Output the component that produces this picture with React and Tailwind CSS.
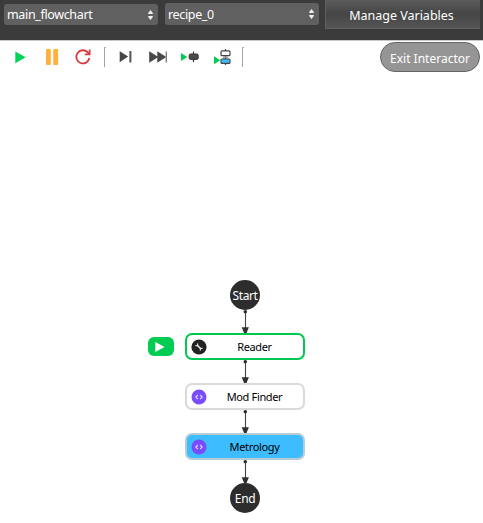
import React from "react";

function Select({ label, className = "" }) {
  return (
    <div className={`flex w-[154px] items-center justify-between rounded-[3px] bg-[#606060] pl-[3px] pr-[5px] text-[12.5px] tracking-[-0.35px] text-white ${className}`}>
      <span className="pt-[2px] leading-none">{label}</span>
      <svg width="5" height="10" viewBox="0 0 5 10" fill="#eeeeee">
        <path d="M2.5 0 4.8 3V4H.2V3ZM2.5 10 4.8 7V6H.2V7Z" />
      </svg>
    </div>
  );
}

function Toolbar() {
  return (
    <div className="flex h-[34px] items-start justify-between border-t border-[#c8c8c8] pr-[3px]">
      <svg width="250" height="32" viewBox="0 41 250 32">
        <path d="M15.3 51.5 25.7 57.3 15.3 63.2Z" fill="#00d358" />
        <rect x="46" y="49" width="4.8" height="16" rx="1" fill="#ffb13b" />
        <rect x="53.3" y="49" width="4.8" height="16" rx="1" fill="#ffb13b" />
        <path d="M89.4 58A6.6 6.6 0 1 1 87.6 52.2L89.4 54" fill="none" stroke="#d63c3f" strokeWidth="1.8" />
        <path d="M89.7 49.5V54.3H84.8" fill="none" stroke="#d63c3f" strokeWidth="1.7" />
        <path d="M106 47.5H104.5V67" fill="none" stroke="#a2a2a2" />
        <path d="M119.7 51.2 128.2 56.6 119.7 62.2Z" fill="#484848" />
        <path d="M130.4 51V62.5" stroke="#555" strokeWidth="2" />
        <path d="M149.2 51.2 158.3 57 149.2 62.8ZM157.3 51.2 166.3 57 157.3 62.8Z" fill="#484848" />
        <path d="M166.3 51.5V62.5" stroke="#777" strokeWidth="1.3" />
        <path d="M181 53 187.3 57 181 61Z" fill="#00cc52" />
        <path d="M193.5 51.5V62" stroke="#333" strokeWidth="1.2" />
        <rect x="189.2" y="54" width="9" height="5.4" rx="1.4" fill="#4b4b4b" stroke="#333" strokeWidth="1" />
        <path d="M214 56.3 220.2 60.3 214 64.3Z" fill="#00cc52" />
        <path d="M225.5 49V65" stroke="#444" strokeWidth="1.2" />
        <rect x="221" y="50.9" width="9" height="4.8" rx="1" fill="#fff" stroke="#444" strokeWidth="1.2" />
        <path d="M223 57.5H228" stroke="#999" strokeWidth="2" />
        <rect x="221" y="59" width="9" height="4.4" rx="1" fill="#3dbdff" stroke="#444" strokeWidth="1.1" />
        <path d="M244 47.5H242.5V67" fill="none" stroke="#a2a2a2" />
      </svg>
      <button className="mt-px flex h-[30px] w-[100px] items-center justify-center whitespace-nowrap rounded-full border border-[#666] bg-[#959595] pt-[4px] text-[12px] leading-none text-white">
        Exit Interactor
      </button>
    </div>
  );
}

function Terminal({ label }) {
  return (
    <div className="flex size-[30px] items-center justify-center rounded-full bg-[#2d2d2d] pt-[2px] text-[12px] leading-none tracking-[-0.4px] text-white">
      {label}
    </div>
  );
}

function ToolBadge() {
  return (
    <svg width="16" height="16" viewBox="0 0 16 16">
      <circle cx="8" cy="8" r="7.6" fill="#222" />
      <path d="m6 6 4 4" stroke="#eee" strokeWidth="1.5" />
      <path d="M4.4 6.6H6.6V4.4M11.6 9.4H9.4V11.6" fill="none" stroke="#ddd" strokeWidth="1.2" />
    </svg>
  );
}

function CodeBadge() {
  return (
    <svg width="16" height="16" viewBox="0 0 16 16">
      <circle cx="8" cy="8" r="7.5" fill="#794cff" />
      <path d="M6.8 6 4.8 8l2 2M9.2 6 11.2 8l-2 2" fill="none" stroke="#ded5ff" strokeWidth="1.1" />
    </svg>
  );
}

function Node({ label, badge, className }) {
  return (
    <div className={`flex h-[27px] w-[120px] items-center rounded-[7px] border-2 pl-[4px] text-[11px] leading-none tracking-[-0.35px] text-black ${className}`}>
      {badge}
      <span className="flex-1 pr-px text-center">{label}</span>
    </div>
  );
}

function Connector() {
  return (
    <svg width="10" height="23" viewBox="0 0 10 23" overflow="visible" fill="#303030">
      <path d="M5.5 0V19" stroke="#444" strokeWidth="1.1" />
      <circle cx="5.3" cy="1.8" r="1.8" />
      <path d="M1.7 17.3H8.9L6.5 23H4.1Z" />
    </svg>
  );
}

function Flowchart() {
  return (
    <div className="flex pl-[148px] pt-[206px]">
      <div className="mt-[57px] flex h-[19px] w-[26px] items-center justify-center rounded-[6px] bg-[#00cb53] pr-[2px]">
        <svg width="10" height="10" viewBox="0 0 10 10" fill="#fff"><path d="M.3 0 9.7 5 .3 10Z" /></svg>
      </div>
      <div className="ml-[11px] flex flex-col items-center">
        <Terminal label="Start" />
        <Connector />
        <Node label="Reader" badge={<ToolBadge />} className="border-[#00c853] bg-white" />
        <Connector />
        <Node label="Mod Finder" badge={<CodeBadge />} className="border-[#dadada] bg-white" />
        <Connector />
        <Node label="Metrology" badge={<CodeBadge />} className="border-[#b9cbd4] bg-[#3dbdff]" />
        <Connector />
        <Terminal label="End" />
      </div>
    </div>
  );
}

export default function App() {
  return (
    <div className="h-[523px] w-[483px] overflow-hidden bg-white font-['Noto_Sans',sans-serif]">
      <header className="flex h-[40px] items-start gap-[6px] bg-[#3b3b3b] pl-[4px]">
        <Select label="main_flowchart" className="mt-[4px] h-[21px]" />
        <Select label="recipe_0" className="ml-px mt-[3px] h-[22px]" />
        <button className="flex h-[29px] w-[155px] items-center justify-center border-b border-l border-[#606060] bg-linear-to-b from-[#5c5c5c] via-[#454545] to-[#555555] pr-[3px] pt-[4px] text-[12.5px] leading-none text-white">
          Manage Variables
        </button>
      </header>
      <Toolbar />
      <Flowchart />
    </div>
  );
}
